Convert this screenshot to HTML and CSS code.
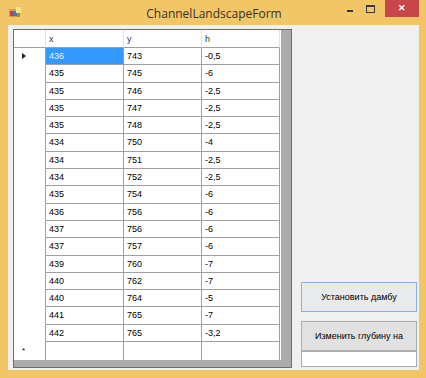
FILE: index.html
```html
<!DOCTYPE html>
<html lang="ru">
<head>
    <meta charset="UTF-8">
    <title>ChannelLandscapeForm</title>
    <link rel="stylesheet" href="styles.css">
</head>
<body>
    <div class="window">
        <!-- Title bar -->
        <div class="titlebar">
            <svg class="app-icon" width="12" height="11" viewBox="0 0 12 11">
                <rect x="0" y="2" width="9" height="8" fill="#c8a05a"/>
                <rect x="1" y="4" width="4" height="5" fill="#b0475a"/>
                <rect x="5" y="4" width="3" height="5" fill="#4a78c0"/>
                <rect x="7" y="0" width="5" height="6" fill="#f6e38a"/>
                <rect x="8" y="6" width="3" height="4" fill="#7aa04a"/>
            </svg>
            <div class="title">ChannelLandscapeForm</div>
            <div class="caption-btns">
                <span class="cap-min"></span>
                <span class="cap-max"></span>
                <span class="cap-close">✕</span>
            </div>
        </div>

        <!-- Client area -->
        <div class="client">
            <div class="grid">
                <div class="grid-body">
                    <div class="row head">
                        <div class="rh"></div>
                        <div class="cell">x</div>
                        <div class="cell">y</div>
                        <div class="cell">h</div>
                    </div>
                    <div id="rows"></div>
                    <div class="row new-row">
                        <div class="rh"><span class="star">*</span></div>
                        <div class="cell"></div>
                        <div class="cell"></div>
                        <div class="cell"></div>
                    </div>
                </div>
            </div>

            <div class="side">
                <button class="btn default">Установить дамбу</button>
                <button class="btn">Изменить глубину на</button>
                <input class="textbox" type="text">
            </div>
        </div>
    </div>

    <script>
        // grid data
        const data = [
            [436, 743, '-0,5'], [435, 745, '-6'], [435, 746, '-2,5'],
            [435, 747, '-2,5'], [435, 748, '-2,5'], [434, 750, '-4'],
            [434, 751, '-2,5'], [434, 752, '-2,5'], [435, 754, '-6'],
            [436, 756, '-6'], [437, 756, '-6'], [437, 757, '-6'],
            [439, 760, '-7'], [440, 762, '-7'], [440, 764, '-5'],
            [441, 765, '-7'], [442, 765, '-3,2']
        ];

        const rows = document.getElementById('rows');
        data.forEach(function (r, i) {
            const row = document.createElement('div');
            row.className = 'row';
            let html = '<div class="rh">' + (i === 0 ? '<span class="arrow"></span>' : '') + '</div>';
            r.forEach(function (v, j) {
                const sel = (i === 0 && j === 0) ? ' selected' : '';
                html += '<div class="cell' + sel + '">' + v + '</div>';
            });
            row.innerHTML = html;
            rows.appendChild(row);
        });
    </script>
</body>
</html>
```

FILE: styles.css
```css
html, body {
    margin: 0;
    padding: 0;
}

body {
    width: 426px;
    height: 378px;
    overflow: hidden;
    font-family: "Liberation Sans", Arial, sans-serif;
}

.window {
    width: 426px;
    height: 378px;
    background: #f2c566;
    display: flex;
    flex-direction: column;
}

/* Title bar */
.titlebar {
    height: 25px;
    flex: none;
    position: relative;
    display: flex;
    align-items: center;
}

.app-icon {
    margin-left: 9px;
    margin-top: -1px;
}

.title {
    position: absolute;
    left: 0;
    right: 0;
    top: 5px;
    text-align: center;
    font-family: "Open Sans", "Noto Sans", sans-serif;
    font-size: 12px;
    color: #3a3226;
    padding-left: 2px;
}

.caption-btns {
    position: absolute;
    top: 0;
    right: 7px;
    display: flex;
    align-items: flex-start;
}

.cap-min {
    width: 6px;
    height: 2px;
    background: #3a3a3a;
    margin: 10px 13px 0 0;
}

.cap-max {
    width: 7px;
    height: 5px;
    border: 1px solid #3a3a3a;
    border-top-width: 2px;
    margin: 5px 10px 0 0;
}

.cap-close {
    width: 34px;
    height: 17px;
    background: #c7464a;
    color: #fff;
    font-size: 9px;
    text-align: center;
    line-height: 17px;
    font-weight: bold;
}

/* Client area */
.client {
    flex: 1;
    margin: 0 7px 8px 8px;
    background: #f0f0f0;
    display: flex;
    padding: 4px 2px 2px 5px;
}

/* DataGridView */
.grid {
    width: 279px;
    height: 339px;
    box-sizing: border-box;
    border: 1px solid #6d6d6d;
    background: #ababab;
    flex: none;
}

.grid-body {
    width: 267px;
    background: #fff;
}

.row {
    display: flex;
    height: 17.3px;
    box-sizing: border-box;
    font-size: 9px;
    color: #000;
}

.rh {
    width: 31px;
    flex: none;
    border-right: 1px solid #a0a0a0;
    position: relative;
}

.cell {
    width: 78px;
    flex: none;
    box-sizing: border-box;
    border-right: 1px solid #a0a0a0;
    border-bottom: 1px solid #a0a0a0;
    padding: 3px 0 0 3px;
    line-height: 11px;
}

.row .cell:last-child {
    width: 78px;
}

.head {
    height: 18px;
}

.head .rh {
    border-right: 1px solid #e4e4e4;
    border-bottom: 1px solid #a0a0a0;
}

.head .cell {
    border-right: 1px solid #e4e4e4;
    color: #333;
    padding-top: 4px;
}

.cell.selected {
    background: #3399ff;
    color: #e8f2ff;
}

.arrow {
    position: absolute;
    left: 8px;
    top: 5px;
    width: 0;
    height: 0;
    border-top: 3px solid transparent;
    border-bottom: 3px solid transparent;
    border-left: 4px solid #222;
}

.new-row {
    height: 18px;
}

.new-row .cell {
    border-bottom: none;
}

.star {
    position: absolute;
    left: 8px;
    top: 4px;
    font-size: 8px;
}

/* Right side controls */
.side {
    flex: 1;
    display: flex;
    flex-direction: column;
    justify-content: flex-end;
    padding-left: 9px;
    padding-bottom: 1px;
}

.btn {
    height: 30px;
    width: 116px;
    box-sizing: border-box;
    font-family: "Liberation Sans", Arial, sans-serif;
    font-size: 9px;
    color: #000;
    background: #e1e1e1;
    border: 1px solid #adadad;
    padding: 0;
    margin-top: 9px;
}

.btn.default {
    border: 1px solid #7eb4ea;
    background: #e8eaec;
}

.textbox {
    width: 116px;
    height: 16px;
    box-sizing: border-box;
    border: 1px solid #abadb3;
    background: #fff;
    margin: 0;
    padding: 0;
}
```
